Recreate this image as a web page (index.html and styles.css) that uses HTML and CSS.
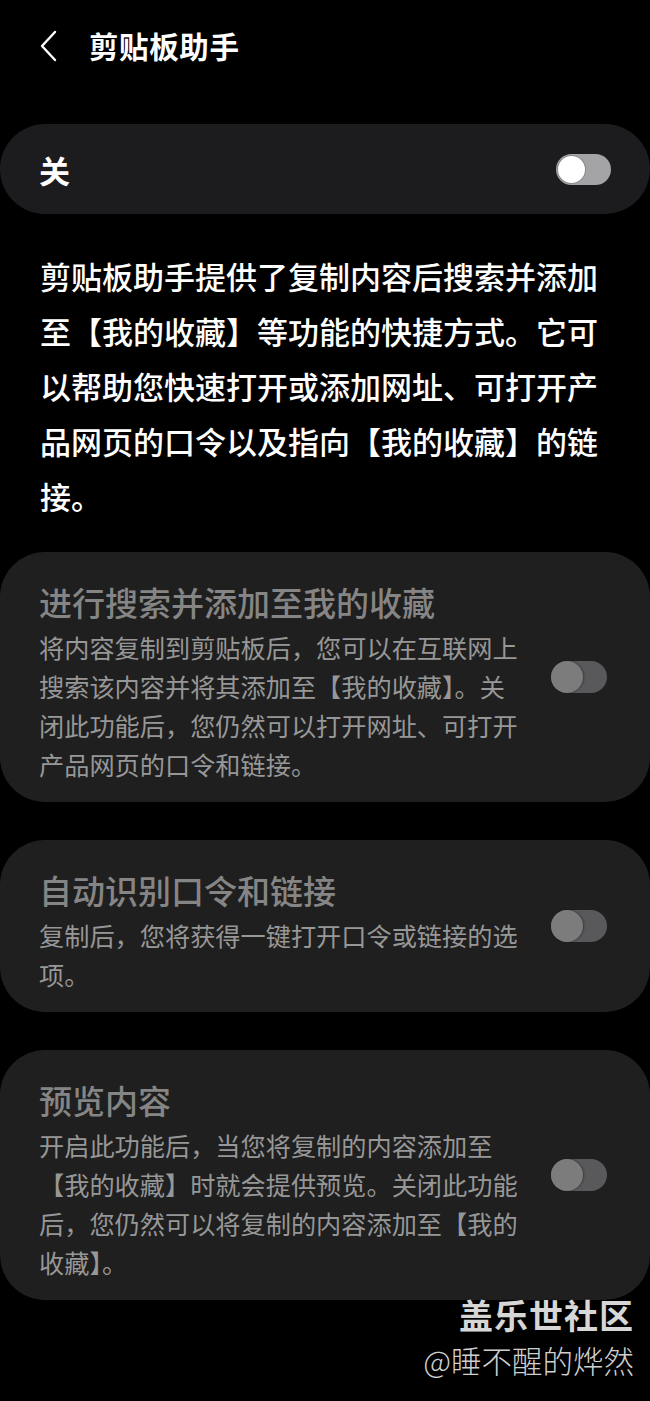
FILE: index.html
```html
<!DOCTYPE html>
<html lang="zh-CN">
<head>
<meta charset="utf-8">
<title>剪贴板助手</title>
<link rel="stylesheet" href="styles.css">
</head>
<body>
<div class="screen">
  <header class="appbar">
    <svg class="back" width="20" height="32" viewBox="0 0 20 32"><path d="M16 2 L3 16 L16 30" fill="none" stroke="#fff" stroke-width="2.4" stroke-linecap="round" stroke-linejoin="round"/></svg>
    <h1 class="title">剪贴板助手</h1>
  </header>

  <section class="master">
    <span class="master-label">关</span>
    <span class="switch switch-off"><span class="knob"></span></span>
  </section>

  <p class="intro">剪贴板助手提供了复制内容后搜索并添加至【我的收藏】等功能的快捷方式。它可以帮助您快速打开或添加网址、可打开产品网页的口令以及指向【我的收藏】的链接。</p>

  <section class="card">
    <div class="card-text">
      <h2 class="card-title">进行搜索并添加至我的收藏</h2>
      <p class="card-body">将内容复制到剪贴板后，您可以在互联网上搜索该内容并将其添加至【我的收藏】。关闭此功能后，您仍然可以打开网址、可打开产品网页的口令和链接。</p>
    </div>
    <span class="switch switch-dis"><span class="knob"></span></span>
  </section>

  <section class="card">
    <div class="card-text">
      <h2 class="card-title">自动识别口令和链接</h2>
      <p class="card-body">复制后，您将获得一键打开口令或链接的选项。</p>
    </div>
    <span class="switch switch-dis"><span class="knob"></span></span>
  </section>

  <section class="card">
    <div class="card-text">
      <h2 class="card-title">预览内容</h2>
      <p class="card-body">开启此功能后，当您将复制的内容添加至<br>【我的收藏】时就会提供预览。关闭此功能后，您仍然可以将复制的内容添加至【我的收藏】。</p>
    </div>
    <span class="switch switch-dis"><span class="knob"></span></span>
  </section>

  <div class="watermark">
    <div class="wm-brand">盖乐世社区</div>
    <div class="wm-user">@睡不醒的烨然</div>
  </div>
</div>
</body>
</html>
```

FILE: styles.css
```css
* { box-sizing: border-box; }
html, body {
  margin: 0;
  padding: 0;
  background: #000;
}
body {
  font-family: "Noto Sans CJK SC", "Noto Sans", sans-serif;
  color: #fff;
}
.screen {
  position: relative;
  width: 650px;
  height: 1401px;
  overflow: hidden;
  background: #000;
}
.appbar {
  display: flex;
  align-items: center;
  height: 92px;
  padding-left: 39px;
}
.back { display: block; margin-top: 0; }
.title {
  margin: 0 0 0 30px;
  font-size: 29.5px;
  font-weight: 700;
  letter-spacing: 0.6px;
  line-height: 1;
}
.master {
  display: flex;
  align-items: center;
  justify-content: space-between;
  height: 90px;
  margin-top: 32px;
  padding: 0 39px 0 39px;
  background: #1c1c1f;
  border-radius: 45px;
}
.master-label {
  font-size: 31px;
  font-weight: 700;
  line-height: 1;
}
.switch {
  position: relative;
  display: block;
  flex: none;
  border-radius: 999px;
}
.switch-off {
  width: 55px;
  height: 31px;
  background: #a4a4a6;
}
.switch-off .knob {
  position: absolute;
  left: 2px;
  top: 2px;
  width: 27px;
  height: 27px;
  border-radius: 50%;
  background: #fff;
  box-shadow: 0 0 0 1px #8a8a8c;
}
.switch-dis {
  width: 56px;
  height: 32px;
  background: #59595b;
  margin-top: -9px;
}
.switch-dis .knob {
  position: absolute;
  left: 0;
  top: 0;
  width: 32px;
  height: 32px;
  border-radius: 50%;
  background: #7c7c7c;
  box-shadow: 1px 0 2px rgba(0,0,0,0.35);
}
.intro {
  margin: 34px 0 29px 40px;
  width: 572px;
  font-size: 31px;
  line-height: 55px;
  font-weight: 500;
  color: #fff;
}
.card {
  display: flex;
  align-items: center;
  justify-content: space-between;
  margin-bottom: 38px;
  padding: 27px 43px 18px 39px;
  background: #1f1f1f;
  border-radius: 45px;
}
.card-text {
  width: 485px;
}
.card-title {
  margin: 0;
  font-size: 33px;
  font-weight: 500;
  line-height: 46px;
  color: #858585;
}
.card-body {
  margin: 3px 0 0;
  font-size: 25.2px;
  line-height: 39px;
  color: #979797;
}
.watermark {
  position: absolute;
  right: 16px;
  top: 1293px;
  text-align: right;
}
.wm-brand {
  font-size: 34px;
  font-weight: 700;
  line-height: 44px;
  color: #d6d6d6;
  letter-spacing: 1px;
  text-shadow: 0 0 2px rgba(0,0,0,0.6);
}
.wm-user {
  margin-top: 4px;
  font-size: 30.5px;
  font-weight: 300;
  line-height: 38px;
  color: #cfcfcf;
}
```
